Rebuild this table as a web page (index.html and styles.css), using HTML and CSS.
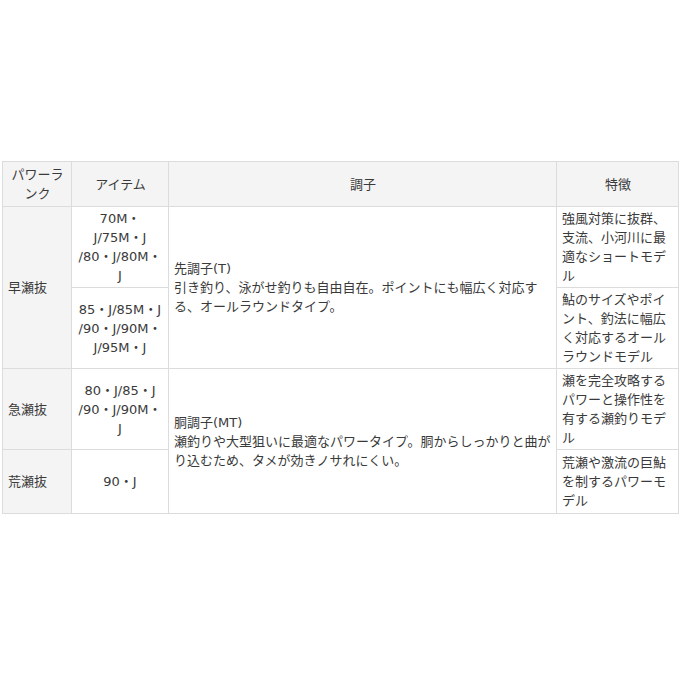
FILE: index.html
```html
<!DOCTYPE html>
<html lang="ja">
<head>
<meta charset="utf-8">
<link rel="stylesheet" href="styles.css">
</head>
<body>
<table class="spec">
  <colgroup>
    <col class="c-rank">
    <col class="c-item">
    <col class="c-tone">
    <col class="c-feat">
  </colgroup>
  <thead>
    <tr>
      <th>パワーランク</th>
      <th>アイテム</th>
      <th>調子</th>
      <th>特徴</th>
    </tr>
  </thead>
  <tbody>
    <tr>
      <td class="rank" rowspan="2">早瀬抜</td>
      <td class="item">70M・<br>J/75M・J<br>/80・J/80M・<br>J</td>
      <td class="tone" rowspan="2">先調子(T)<br>引き釣り、泳がせ釣りも自由自在。ポイントにも幅広く対応する、オールラウンドタイプ。</td>
      <td class="feat">強風対策に抜群、支流、小河川に最適なショートモデル</td>
    </tr>
    <tr>
      <td class="item">85・J/85M・J<br>/90・J/90M・<br>J/95M・J</td>
      <td class="feat">鮎のサイズやポイント、釣法に幅広く対応するオールラウンドモデル</td>
    </tr>
    <tr>
      <td class="rank">急瀬抜</td>
      <td class="item">80・J/85・J<br>/90・J/90M・<br>J</td>
      <td class="tone" rowspan="2">胴調子(MT)<br>瀬釣りや大型狙いに最適なパワータイプ。胴からしっかりと曲がり込むため、タメが効きノサれにくい。</td>
      <td class="feat">瀬を完全攻略するパワーと操作性を有する瀬釣りモデル</td>
    </tr>
    <tr>
      <td class="rank">荒瀬抜</td>
      <td class="item">90・J</td>
      <td class="feat">荒瀬や激流の巨鮎を制するパワーモデル</td>
    </tr>
  </tbody>
</table>
</body>
</html>
```
FILE: styles.css
```css
html, body {
  margin: 0;
  padding: 0;
  background: #ffffff;
}
body {
  font-family: "DejaVu Sans", "Noto Sans CJK JP", sans-serif;
  font-size: 13px;
  line-height: 19px;
  color: #3a3a3a;
}
.spec {
  margin: 161px 0 0 2px;
  width: 676px;
  table-layout: fixed;
  border-collapse: collapse;
}
.c-rank { width: 69px; }
.c-item { width: 97px; }
.c-tone { width: 388px; }
.c-feat { width: 122px; }
.spec th,
.spec td {
  border: 1px solid #dcdcdc;
  padding: 2px 4px 2px 5px;
  vertical-align: middle;
  font-weight: normal;
  text-align: left;
}
.spec th {
  background: #f4f4f4;
  text-align: center;
  height: 40px;
}
.spec td.rank {
  background: #f4f4f4;
}
.spec td.item {
  text-align: center;
  height: 76px;
  padding-left: 3px;
  padding-right: 3px;
}
.spec tbody tr:last-child td.item {
  height: 59px;
}
```
